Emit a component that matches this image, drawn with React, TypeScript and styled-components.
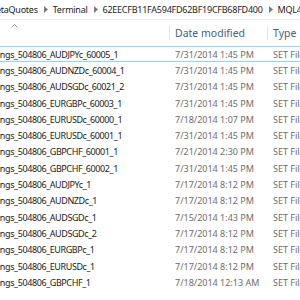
import styled, { createGlobalStyle } from 'styled-components';

const files = [
  { name: 'Settings_504806_AUDJPYc_60005_1', date: '7/31/2014 1:45 PM' },
  { name: 'Settings_504806_AUDNZDc_60004_1', date: '7/31/2014 1:45 PM' },
  { name: 'Settings_504806_AUDSGDc_60021_2', date: '7/31/2014 1:45 PM' },
  { name: 'Settings_504806_EURGBPc_60003_1', date: '7/31/2014 1:45 PM' },
  { name: 'Settings_504806_EURUSDc_60000_1', date: '7/18/2014 1:07 PM' },
  { name: 'Settings_504806_EURUSDc_60001_1', date: '7/31/2014 1:45 PM' },
  { name: 'Settings_504806_GBPCHF_60001_1', date: '7/21/2014 2:30 PM' },
  { name: 'Settings_504806_GBPCHF_60002_1', date: '7/31/2014 1:45 PM' },
  { name: 'Settings_504806_AUDJPYc_1', date: '7/17/2014 8:12 PM' },
  { name: 'Settings_504806_AUDNZDc_1', date: '7/17/2014 8:12 PM' },
  { name: 'Settings_504806_AUDSGDc_1', date: '7/15/2014 1:43 PM' },
  { name: 'Settings_504806_AUDSGDc_2', date: '7/17/2014 8:12 PM' },
  { name: 'Settings_504806_EURGBPc_1', date: '7/17/2014 8:12 PM' },
  { name: 'Settings_504806_EURUSDc_1', date: '7/17/2014 8:12 PM' },
  { name: 'Settings_504806_GBPCHF_1', date: '7/18/2014 12:13 AM' },
];

const crumbs = ['MetaQuotes', 'Terminal', '62EECFB11FA594FD62BF19CFB68FD400', 'MQL4'];

const Chevron = () => (
  <svg width="4" height="7" viewBox="0 0 4 7">
    <path d="M0 0 L4 3.5 L0 7 Z" fill="#7a7a7a" />
  </svg>
);

const SortArrow = () => (
  <svg width="7" height="4" viewBox="0 0 7 4">
    <path d="M0.5 3.5 L3.5 0.5 L6.5 3.5" fill="none" stroke="#8aa0bb" strokeWidth="1" />
  </svg>
);

const App = () => {
  return (
    <>
      <GlobalStyle />
      <Window>
        <AddressBar>
          <Crumbs>
            {crumbs.map((c, i) => (
              <Crumb key={c}>
                {i > 0 && <Chevron />}
                <span>{c}</span>
              </Crumb>
            ))}
          </Crumbs>
        </AddressBar>
        <Sheet>
          <HeaderRow>
            <NameHead>
              <SortArrow />
            </NameHead>
            <HeadCell>Date modified</HeadCell>
            <HeadCell>Type</HeadCell>
          </HeaderRow>
          {files.map((f, i) => (
            <Row key={f.name} $focused={i === 0}>
              <NameCell>{f.name}</NameCell>
              <InfoCell>{f.date}</InfoCell>
              <InfoCell>SET File</InfoCell>
            </Row>
          ))}
        </Sheet>
      </Window>
    </>
  );
};

export default App;

const GlobalStyle = createGlobalStyle`
  html, body {
    margin: 0;
    padding: 0;
    background: #ffffff;
    overflow: hidden;
  }
  body {
    font-family: "Noto Sans", "Open Sans", sans-serif;
    font-size: 9px;
  }
`;

const Window = styled.div`
  width: 300px;
  height: 300px;
  overflow: hidden;
  background: #ffffff;
`;

const AddressBar = styled.div`
  height: 19px;
  border-bottom: 1px solid #f0f0f0;
  display: flex;
  align-items: center;
  overflow: hidden;
  white-space: nowrap;
`;

const Crumbs = styled.div`
  display: flex;
  align-items: center;
  gap: 6px;
  margin-left: -12px;
  color: #1e1e1e;
  font-size: 9px;
  letter-spacing: -0.25px;
`;

const Crumb = styled.div`
  display: flex;
  align-items: center;
  gap: 5px;
`;

const Sheet = styled.div`
  margin-left: -141px;
  white-space: nowrap;
`;

const columns = `
  display: grid;
  grid-template-columns: 310px 98px 1fr;
  align-items: center;
`;

const HeaderRow = styled.div`
  ${columns}
  height: 26px;
`;

const NameHead = styled.div`
  align-self: start;
  display: flex;
  justify-content: center;
  padding-top: 4px;
`;

const HeadCell = styled.div`
  height: 14px;
  line-height: 14px;
  border-left: 1px solid #e5e5e5;
  padding-left: 5px;
  color: #4c607a;
  font-size: 10.5px;
`;

const Row = styled.div<{ $focused?: boolean }>`
  ${columns}
  height: 16.3px;
  box-sizing: border-box;
  border-top: 1px solid ${(p) => (p.$focused ? '#99d1ff' : 'transparent')};
  border-bottom: 1px solid ${(p) => (p.$focused ? '#99d1ff' : 'transparent')};
`;

const NameCell = styled.div`
  padding-left: 124px;
  color: #1a1a1a;
  letter-spacing: -0.4px;
  overflow: hidden;
`;

const InfoCell = styled.div`
  padding-left: 6px;
  color: #6d6d6d;
  overflow: hidden;
`;
